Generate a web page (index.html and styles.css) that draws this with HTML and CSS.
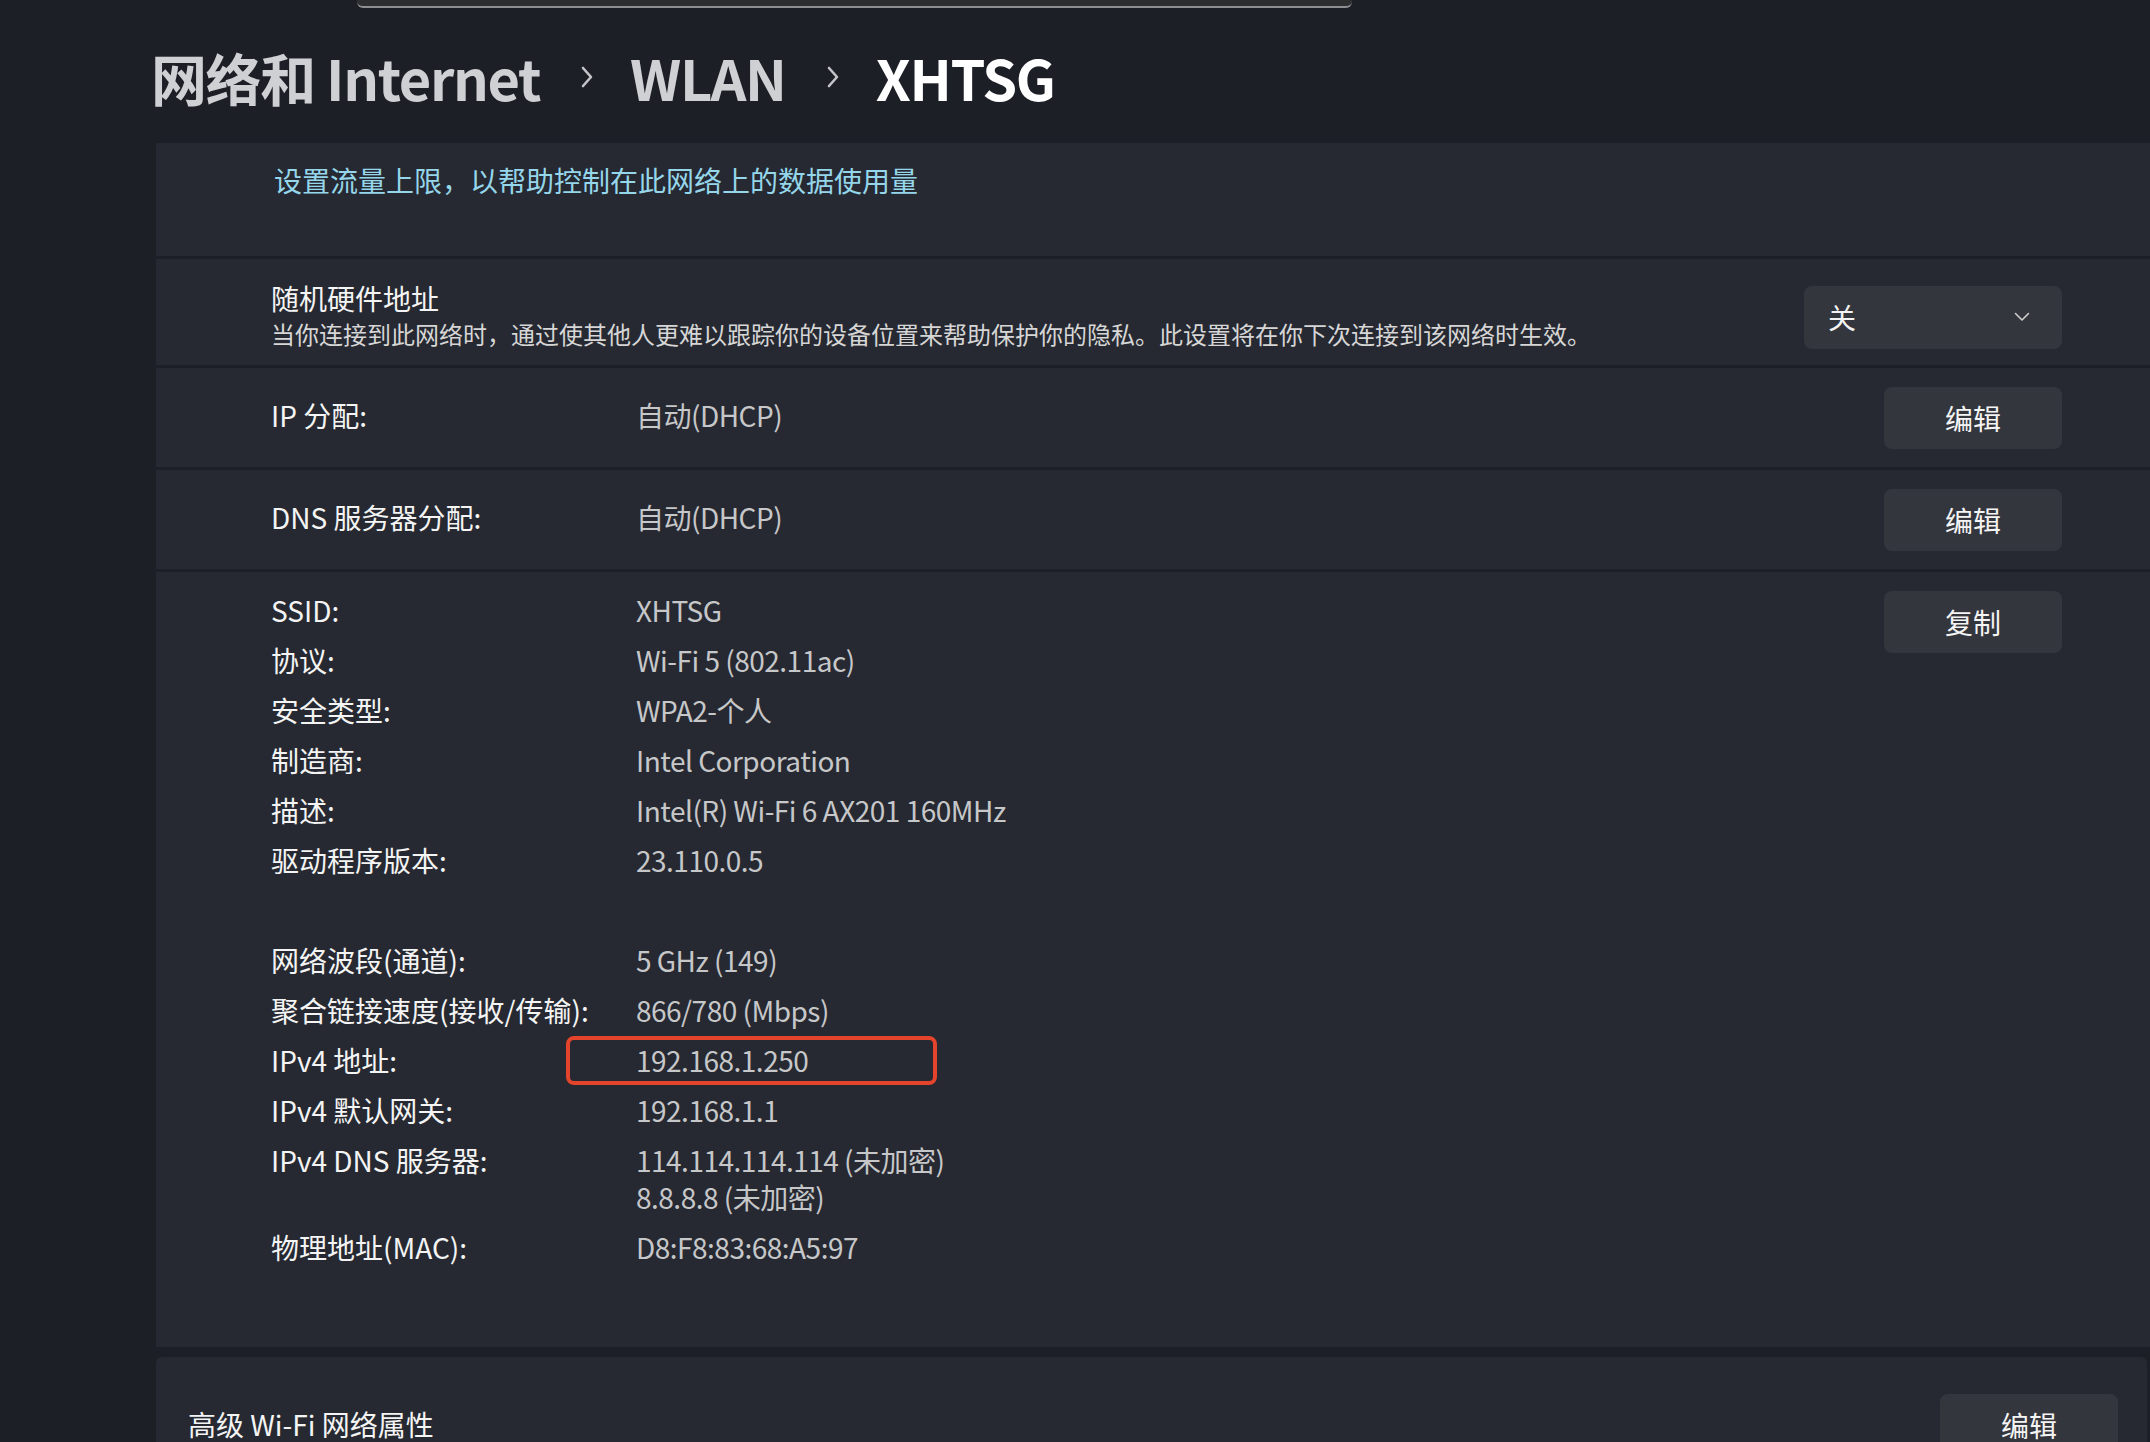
FILE: index.html
```html
<!DOCTYPE html>
<html lang="zh-CN">
<head>
<meta charset="utf-8">
<title>XHTSG</title>
<link rel="stylesheet" href="styles.css">
</head>
<body>
<div class="topbar"></div>
<header class="crumbs">
  <span class="crumb prev">网络和 Internet</span>
  <svg class="sep" viewBox="0 0 14 24" width="14" height="24"><polyline points="3,3 11,12 3,21" fill="none" stroke="currentColor" stroke-width="2.6" stroke-linecap="round" stroke-linejoin="round"/></svg>
  <span class="crumb prev">WLAN</span>
  <svg class="sep" viewBox="0 0 14 24" width="14" height="24"><polyline points="3,3 11,12 3,21" fill="none" stroke="currentColor" stroke-width="2.6" stroke-linecap="round" stroke-linejoin="round"/></svg>
  <span class="crumb cur">XHTSG</span>
</header>

<main class="panel">
  <section class="card card-link">
    <a class="link">设置流量上限，以帮助控制在此网络上的数据使用量</a>
  </section>

  <section class="card card-row card-random">
    <div class="text-block">
      <div class="title">随机硬件地址</div>
      <div class="desc">当你连接到此网络时，通过使其他人更难以跟踪你的设备位置来帮助保护你的隐私。此设置将在你下次连接到该网络时生效。</div>
    </div>
    <div class="select">
      <span>关</span>
      <svg viewBox="0 0 16 10" width="16" height="10"><polyline points="1.5,1.5 8,8 14.5,1.5" fill="none" stroke="currentColor" stroke-width="1.6" stroke-linecap="round" stroke-linejoin="round"/></svg>
    </div>
  </section>

  <section class="card card-row card-short">
    <div class="pair"><span class="label">IP 分配:</span><span class="value">自动(DHCP)</span></div>
    <button class="btn">编辑</button>
  </section>

  <section class="card card-row card-short">
    <div class="pair"><span class="label">DNS 服务器分配:</span><span class="value">自动(DHCP)</span></div>
    <button class="btn">编辑</button>
  </section>

  <section class="card card-info">
    <div class="info">
      <dl class="group">
        <dt>SSID:</dt><dd>XHTSG</dd>
        <dt>协议:</dt><dd>Wi-Fi 5 (802.11ac)</dd>
        <dt>安全类型:</dt><dd>WPA2-个人</dd>
        <dt>制造商:</dt><dd>Intel Corporation</dd>
        <dt>描述:</dt><dd>Intel(R) Wi-Fi 6 AX201 160MHz</dd>
        <dt>驱动程序版本:</dt><dd>23.110.0.5</dd>
      </dl>
      <dl class="group group-2">
        <dt>网络波段(通道):</dt><dd>5 GHz (149)</dd>
        <dt>聚合链接速度(接收/传输):</dt><dd>866/780 (Mbps)</dd>
        <dt>IPv4 地址:</dt><dd class="marked">192.168.1.250<span class="highlight"></span></dd>
        <dt>IPv4 默认网关:</dt><dd>192.168.1.1</dd>
        <dt>IPv4 DNS 服务器:</dt><dd>114.114.114.114 (未加密)<br>8.8.8.8 (未加密)</dd>
        <dt>物理地址(MAC):</dt><dd>D8:F8:83:68:A5:97</dd>
      </dl>
    </div>
    <button class="btn">复制</button>
  </section>
</main>

<section class="card-adv">
  <span class="adv-title">高级 Wi-Fi 网络属性</span>
  <button class="btn">编辑</button>
</section>
</body>
</html>
```

FILE: styles.css
```css
html, body {
  margin: 0;
  padding: 0;
  overflow: hidden;
}

body {
  background: #1c1f26;
  font-family: "Noto Sans CJK SC", "Noto Sans", sans-serif;
  color: #f2f2f2;
  width: 2150px;
  height: 1442px;
}

.topbar {
  margin-left: 357px;
  width: 995px;
  height: 6px;
  background: #2d2e30;
  border-bottom: 2px solid #8e8f91;
  border-radius: 0 0 6px 6px;
}

.crumbs {
  display: flex;
  align-items: center;
  margin-top: 34px;
  padding-left: 151px;
  height: 70px;
  font-size: 56px;
  font-weight: 600;
  line-height: 70px;
  letter-spacing: -1.4px;
}

.crumb.prev {
  color: #cfd0d3;
}

.crumb.cur {
  color: #ffffff;
}

.sep {
  color: #c4c5c8;
  margin: 0 36px 0 40px;
}

.panel {
  margin-top: 31px;
  margin-left: 156px;
  display: flex;
  flex-direction: column;
  gap: 3px;
}

.card {
  background: #262931;
  box-sizing: border-box;
}

.card-link {
  height: 113px;
  padding: 18px 0 0 118px;
}

.link {
  color: #95d6ea;
  font-size: 28px;
  line-height: 38px;
}

.card-row {
  display: flex;
  align-items: center;
  justify-content: space-between;
  padding: 0 88px 0 115px;
}

.card-random {
  height: 106px;
  padding-top: 8px;
}

.title {
  font-size: 28px;
  line-height: 36px;
  color: #f4f4f4;
}

.desc {
  font-size: 24px;
  line-height: 36px;
  color: #d6d6d6;
}

.select {
  width: 258px;
  height: 63px;
  box-sizing: border-box;
  background: #33363c;
  border-radius: 8px;
  margin-top: 2px;
  display: flex;
  align-items: center;
  justify-content: space-between;
  padding: 0 32px 0 24px;
  font-size: 28px;
  color: #f2f2f2;
}

.select svg {
  color: #cfcfcf;
}

.card-short {
  height: 99px;
}

.pair {
  display: flex;
  font-size: 28px;
  line-height: 37px;
  margin-top: -4px;
}

.label,
.group dt {
  color: #f4f4f4;
}

.pair .label {
  width: 365px;
}

.value,
.group dd {
  color: #c6c7c9;
  letter-spacing: -0.5px;
}

.btn {
  width: 178px;
  height: 62px;
  border: none;
  border-radius: 8px;
  background: #34363d;
  color: #f4f4f4;
  font-family: inherit;
  font-size: 28px;
  padding: 0;
  flex: none;
}

.card-info {
  height: 775px;
  display: flex;
  align-items: flex-start;
  justify-content: space-between;
  padding: 19px 88px 0 115px;
}

.info {
  margin-top: 1px;
}

.group {
  display: grid;
  grid-template-columns: 365px auto;
  row-gap: 13px;
  margin: 0;
  font-size: 28px;
  line-height: 37px;
}

.group dt,
.group dd {
  margin: 0;
}

.group-2 {
  margin-top: 63px;
}

.marked {
  position: relative;
}

.highlight {
  position: absolute;
  left: -70px;
  top: -6px;
  width: 371px;
  height: 49px;
  box-sizing: border-box;
  border: 4px solid #e4432c;
  border-radius: 8px;
}

.card-adv {
  margin: 10px 0 0 156px;
  width: 1991px;
  height: 140px;
  box-sizing: border-box;
  background: #262931;
  border-radius: 6px;
  display: flex;
  align-items: flex-start;
  justify-content: space-between;
  padding: 37px 29px 0 32px;
}

.adv-title {
  font-size: 28px;
  line-height: 60px;
  color: #f4f4f4;
}
```
